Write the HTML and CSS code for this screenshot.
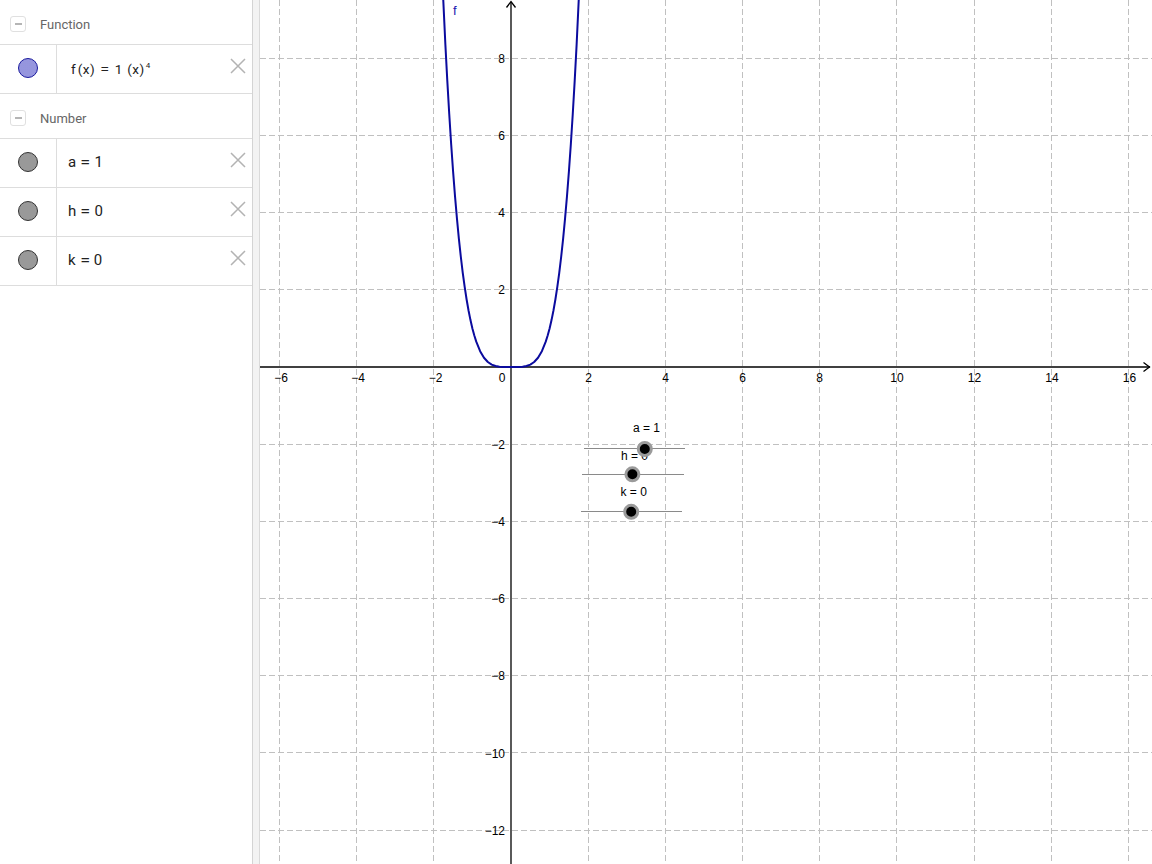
FILE: index.html
```html
<!DOCTYPE html>
<html>
<head>
<meta charset="utf-8">
<link rel="stylesheet" href="styles.css">
</head>
<body>
<div class="app">
  <div class="algebra">
    <div class="group-header"><span class="collapse"><span class="collapse-bar"></span></span><span class="group-title">Function</span></div>
    <div class="item">
      <div class="marble-cell"><span class="marble marble-fn"></span></div>
      <div class="item-content formula">f<span class="paren">(x)</span><span class="op">=</span>1<span class="paren2">(x)</span><sup class="pow">4</sup></div>
      <div class="delete"><svg viewBox="0 0 16 16" width="16" height="16"><path d="M1 1L15 15M15 1L1 15" stroke="#b3b3b3" stroke-width="1.5" fill="none"/></svg></div>
    </div>
    <div class="group-header"><span class="collapse"><span class="collapse-bar"></span></span><span class="group-title">Number</span></div>
    <div class="item">
      <div class="marble-cell"><span class="marble"></span></div>
      <div class="item-content">a<span class="op">=</span>1</div>
      <div class="delete"><svg viewBox="0 0 16 16" width="16" height="16"><path d="M1 1L15 15M15 1L1 15" stroke="#b3b3b3" stroke-width="1.5" fill="none"/></svg></div>
    </div>
    <div class="item">
      <div class="marble-cell"><span class="marble"></span></div>
      <div class="item-content">h<span class="op">=</span>0</div>
      <div class="delete"><svg viewBox="0 0 16 16" width="16" height="16"><path d="M1 1L15 15M15 1L1 15" stroke="#b3b3b3" stroke-width="1.5" fill="none"/></svg></div>
    </div>
    <div class="item">
      <div class="marble-cell"><span class="marble"></span></div>
      <div class="item-content">k<span class="op">=</span>0</div>
      <div class="delete"><svg viewBox="0 0 16 16" width="16" height="16"><path d="M1 1L15 15M15 1L1 15" stroke="#b3b3b3" stroke-width="1.5" fill="none"/></svg></div>
    </div>
  </div>
  <div class="splitter"></div>
  <div class="graphics">
    <svg class="canvas" width="892" height="864" viewBox="260 0 892 864">
      <g class="grid" stroke="#c0c0c0" stroke-width="1" stroke-dasharray="6 3" fill="none">
        <path d="M279.5 0V864M356.5 0V864M433.5 0V864M588.5 0V864M665.5 0V864M742.5 0V864M819.5 0V864M896.5 0V864M974.5 0V864M1051.5 0V864M1128.5 0V864"/>
        <path d="M260 58.5H1152M260 135.5H1152M260 212.5H1152M260 289.5H1152M260 444.5H1152M260 521.5H1152M260 598.5H1152M260 675.5H1152M260 752.5H1152M260 830.5H1152"/>
      </g>
      <g class="axes" stroke="#000" stroke-width="1.3" fill="none">
        <path d="M260 367H1150"/>
        <path d="M511 864V2"/>
        <path d="M1143.5 362.5L1149.5 367L1143.5 371.5"/>
        <path d="M506.5 7.5L511 1.5L515.5 7.5"/>
      </g>
      <g class="ticklabels" font-family="Liberation Sans, Arial, sans-serif" font-size="12" fill="#000">
        <g text-anchor="middle">
          <text x="281" y="382">−6</text>
          <text x="358" y="382">−4</text>
          <text x="435.5" y="382">−2</text>
          <text x="502" y="382">0</text>
          <text x="588.5" y="382">2</text>
          <text x="665.5" y="382">4</text>
          <text x="742.5" y="382">6</text>
          <text x="819.5" y="382">8</text>
          <text x="897" y="382">10</text>
          <text x="974.5" y="382">12</text>
          <text x="1129.5" y="382">16</text>
          <text x="1052" y="382">14</text>
        </g>
        <g text-anchor="end">
          <text x="505" y="62.7">8</text>
          <text x="505" y="139.9">6</text>
          <text x="505" y="217.1">4</text>
          <text x="505" y="294.3">2</text>
          <text x="505" y="448.7">−2</text>
          <text x="505" y="525.9">−4</text>
          <text x="505" y="603.1">−6</text>
          <text x="505" y="680.3">−8</text>
          <text x="505" y="757.5">−10</text>
          <text x="505" y="834.7">−12</text>
        </g>
      </g>
      <polyline class="curve" fill="none" stroke="#0b0b9e" stroke-width="2" stroke-linejoin="round" points="442.3,-20.5 445.38,44.61 447.31,80.9 449.24,114.03 451.17,144.2 453.1,171.59 455.03,196.37 456.96,218.71 458.89,238.8 460.82,256.75 462.75,272.76 464.68,286.96 466.61,299.49 468.54,310.49 470.47,320.08 472.4,328.4 474.33,335.56 476.26,341.67 480.12,351.19 483.98,357.73 487.84,362 491.7,364.59 495.56,366.01 499.42,366.69 503.28,366.94 507.14,367 511,367 514.86,367 518.72,366.94 522.58,366.69 526.44,366.01 530.3,364.59 534.16,362 538.02,357.73 541.88,351.19 545.74,341.67 547.67,335.56 549.6,328.4 551.53,320.08 553.46,310.49 555.39,299.49 557.32,286.96 559.25,272.76 561.18,256.75 563.11,238.8 565.04,218.71 566.97,196.37 568.9,171.59 570.83,144.2 572.76,114.03 574.69,80.9 576.62,44.61 579.7,-20.5"/>
      <text x="453" y="15" font-family="Liberation Sans, Arial, sans-serif" font-size="13" fill="#2020b0">f</text>
      <g class="sliders" stroke="#8a8a8a" stroke-width="1">
        <path d="M584 448.5H685M582 474.5H684M581 511.5H682"/>
      </g>
      <g class="slider-labels" font-family="Liberation Sans, Arial, sans-serif" font-size="12" fill="#000">
        <text x="633" y="432">a = 1</text>
        <text x="621" y="459.5">h = 0</text>
        <text x="620.5" y="496">k = 0</text>
      </g>
      <g class="points" fill="#000" stroke="#9a9a9a" stroke-width="3">
        <circle cx="644.8" cy="449" r="6.5"/>
        <circle cx="632.4" cy="474.3" r="6.5"/>
        <circle cx="631.2" cy="511.8" r="6.5"/>
      </g>
    </svg>
  </div>
</div>
</body>
</html>
```

FILE: styles.css
```css
html, body {
  margin: 0;
  padding: 0;
  background: #fff;
  overflow: hidden;
}
body {
  font-family: Roboto, "Noto Sans", "Liberation Sans", sans-serif;
}
.app {
  display: flex;
  width: 1152px;
  height: 864px;
}
.algebra {
  width: 252px;
  flex: none;
  display: flex;
  flex-direction: column;
}
.group-header {
  height: 40px;
  padding-top: 4px;
  border-bottom: 1px solid #dddddd;
  display: flex;
  align-items: center;
  padding-left: 10px;
  box-sizing: content-box;
}
.collapse {
  width: 14px;
  height: 14px;
  border: 1px solid #e0e0e0;
  border-radius: 3px;
  display: flex;
  align-items: center;
  justify-content: center;
}
.collapse-bar {
  width: 7px;
  height: 1.5px;
  background: #b5b5b5;
}
.group-title {
  margin-left: 14px;
  font-size: 13px;
  color: #666;
}
.item {
  height: 48px;
  border-bottom: 1px solid #dddddd;
  display: flex;
  align-items: center;
}
.marble-cell {
  width: 57px;
  height: 48px;
  flex: none;
  border-right: 1px solid #dddddd;
  display: flex;
  align-items: center;
  justify-content: center;
  padding-bottom: 3px;
  box-sizing: border-box;
}
.marble {
  width: 18px;
  height: 18px;
  border-radius: 50%;
  border: 1px solid #333;
  background: #999;
}
.marble-fn {
  border-color: #1c1c9e;
  background-color: #7e7ed2;
  background-image: radial-gradient(circle, #b0b0ea 0.5px, transparent 0.9px);
  background-size: 2px 2px;
}
.item-content {
  flex: 1;
  padding-left: 11px;
  padding-bottom: 3px;
  font-size: 15px;
  color: #222;
}
.formula {
  font-size: 13.5px;
  padding-left: 14px;
  padding-bottom: 1px;
}
.paren {
  margin-left: 2px;
  letter-spacing: 0.5px;
}
.paren2 {
  margin-left: 5px;
  letter-spacing: 0.5px;
}
.op {
  display: inline-block;
  margin: 0 5px 0 5px;
  transform: scaleX(1.2);
}
.formula .op {
  margin: 0 6px 0 6px;
}
.pow {
  font-size: 8px;
  vertical-align: 6px;
  line-height: 0;
  margin-left: 1px;
}
.delete {
  width: 16px;
  height: 16px;
  margin-right: 6px;
  margin-bottom: 7px;
  flex: none;
}
.delete svg {
  display: block;
}
.splitter {
  width: 6px;
  flex: none;
  border-left: 1px solid #d4d4d4;
  border-right: 1px solid #dadada;
  background: #f3f3f3;
}
.graphics {
  flex: 1;
  overflow: hidden;
}
.canvas {
  display: block;
}
```
